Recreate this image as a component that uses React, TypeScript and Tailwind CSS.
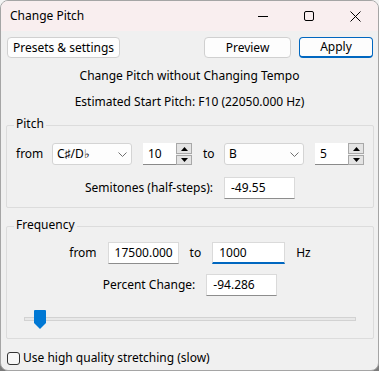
import React from 'react';

const font = { fontFamily: '"Noto Sans", "Open Sans", sans-serif' };

function Combo({ value }: { value: string }) {
  return (
    <div className="w-[80px] h-[22px] flex items-center justify-between bg-[#fdfdfd] border border-[#d4d4d4] rounded-[3px] pl-[4px] pr-[4px]">
      <span>{value}</span>
      <svg width="9" height="5" viewBox="0 0 9 5" fill="none">
        <path d="M0.5 0.5 L4.5 4.5 L8.5 0.5" stroke="#707070" strokeWidth="1" />
      </svg>
    </div>
  );
}

function Spin({ value }: { value: string }) {
  return (
    <div className="flex items-center h-[22px]">
      <div className="w-[33px] h-[22px] bg-white border-b border-[#8a8a8a] flex items-center pl-[5px]">{value}</div>
      <div className="flex flex-col gap-[1px]">
        <div className="w-[16px] h-[11px] bg-[#e4e4e4] border border-[#a8a8a8] flex items-center justify-center">
          <svg width="7" height="4" viewBox="0 0 7 4"><path d="M3.5 0 L7 4 L0 4 Z" fill="#000" /></svg>
        </div>
        <div className="w-[16px] h-[10px] bg-[#e4e4e4] border border-[#a8a8a8] flex items-center justify-center">
          <svg width="7" height="4" viewBox="0 0 7 4"><path d="M0 0 L7 0 L3.5 4 Z" fill="#000" /></svg>
        </div>
      </div>
    </div>
  );
}

function Field({ value, w, focus }: { value: string; w: string; focus?: boolean }) {
  return (
    <div
      className={`${w} h-[22px] bg-white flex items-center pl-[6px] border-[#dadada] border-t border-x ${
        focus ? 'border-b-2 border-b-[#0067c0]' : 'border-b border-b-[#8d8d8d]'
      }`}
    >
      {value}
    </div>
  );
}

function Group({ label, h, mt, children }: { label: string; h: string; mt: string; children: React.ReactNode }) {
  return (
    <div className={`relative ml-[5px] w-[368px] ${h} ${mt} border border-[#dcdcdc] rounded-[2px]`}>
      <span className="absolute left-[7px] top-[-10px] px-[2px] leading-[16px] bg-[#f0f0f0]">{label}</span>
      {children}
    </div>
  );
}

export default function App() {
  return (
    <div className="w-[379px] h-[371px] bg-[linear-gradient(#f4f4f4,#7a7a7a)]" style={font}>
      <div className="w-[379px] h-[371px] rounded-[8px] overflow-hidden border border-[#a5a5a5] bg-[#f0f0f0] flex flex-col text-[12px] text-black">
        {/* title bar */}
        <div className="h-[30px] bg-[#f9eeef] flex items-center shrink-0">
          <span className="ml-[9px] flex-1">Change Pitch</span>
          <div className="w-[46px] h-[30px] flex items-center justify-center">
            <svg width="10" height="10" viewBox="0 0 10 10"><path d="M0 5.5 H10" stroke="#000" strokeWidth="1" /></svg>
          </div>
          <div className="w-[46px] h-[30px] flex items-center justify-center">
            <svg width="10" height="10" viewBox="0 0 10 10"><rect x="0.5" y="0.5" width="9" height="9" rx="1.5" fill="none" stroke="#000" strokeWidth="1" /></svg>
          </div>
          <div className="w-[46px] h-[30px] flex items-center justify-center">
            <svg width="11" height="11" viewBox="0 0 11 11"><path d="M0.5 0.5 L10.5 10.5 M10.5 0.5 L0.5 10.5" stroke="#000" strokeWidth="1" /></svg>
          </div>
        </div>

        {/* buttons */}
        <div className="flex items-center ml-[6px] mr-[5px] mt-[6px] h-[21px]">
          <button className="w-[113px] h-[21px] bg-[#fdfdfd] border border-[#d0d0d0] rounded-[4px]">Presets &amp; settings</button>
          <div className="flex-1" />
          <button className="w-[87px] h-[21px] bg-[#fdfdfd] border border-[#d0d0d0] rounded-[4px]">Preview</button>
          <button className="w-[74px] h-[21px] ml-[8px] bg-[#fdfdfd] border border-[#0067c0] border-b-2 rounded-[4px]">Apply</button>
        </div>

        <div className="text-center mt-[10px] leading-[16px]">Change Pitch without Changing Tempo</div>
        <div className="text-center mt-[10px] leading-[16px]">Estimated Start Pitch: F10 (22050.000 Hz)</div>

        {/* pitch group */}
        <Group label="Pitch" h="h-[83px]" mt="mt-[15px]">
          <div className="flex items-center mt-[17px] ml-[9px] h-[22px]">
            <span className="w-[36px]">from</span>
            <Combo value="C♯/D♭" />
            <div className="ml-[11px]"><Spin value="10" /></div>
            <span className="ml-[11px] w-[21px]">to</span>
            <Combo value="B" />
            <div className="ml-[11px]"><Spin value="5" /></div>
          </div>
          <div className="flex items-center justify-center gap-[11px] mt-[12px] h-[22px]">
            <span>Semitones (half-steps):</span>
            <Field value="-49.55" w="w-[71px]" />
          </div>
        </Group>

        {/* frequency group */}
        <Group label="Frequency" h="h-[113px]" mt="mt-[18px]">
          <div className="flex items-center justify-center gap-[11px] mt-[15px] h-[22px]">
            <span>from</span>
            <Field value="17500.000" w="w-[71px]" />
            <span>to</span>
            <Field value="1000" w="w-[73px]" focus />
            <span>Hz</span>
          </div>
          <div className="flex items-center justify-center gap-[11px] mt-[10px] h-[22px]">
            <span>Percent Change:</span>
            <Field value="-94.286" w="w-[71px]" />
          </div>
          <div className="relative mt-[14px] h-[19px] ml-[17px] w-[332px]">
            <div className="absolute left-0 right-0 top-[7px] h-[4px] bg-[#e8e8e8] border border-[#d2d2d2]" />
            <svg className="absolute left-[10px] top-0" width="12" height="19" viewBox="0 0 12 19">
              <path d="M0 1 Q0 0 1 0 H11 Q12 0 12 1 V13 L6 19 L0 13 Z" fill="#0078d4" />
            </svg>
          </div>
        </Group>

        {/* checkbox */}
        <label className="flex items-center mt-[11px] ml-[6px] h-[16px]">
          <span className="w-[13px] h-[13px] border border-[#333] rounded-[3px] bg-[#f7f7f7]" />
          <span className="ml-[3px]">Use high quality stretching (slow)</span>
        </label>
      </div>
    </div>
  );
}
